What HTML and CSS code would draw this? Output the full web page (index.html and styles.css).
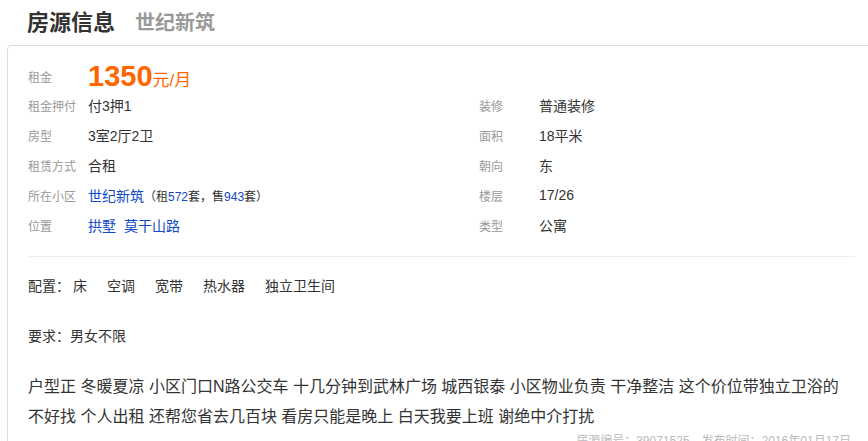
FILE: index.html
```html
<!DOCTYPE html>
<html lang="zh-CN">

<head>
    <meta charset="UTF-8">
    <meta name="viewport" content="width=device-width, initial-scale=1.0">
    <title>房源信息 - 世纪新筑</title>
    <link rel="stylesheet" href="styles.css">
</head>

<body>
    <div class="page-title">
        <h1>房源信息</h1>
        <span class="estate-name">世纪新筑</span>
    </div>

    <div class="card">
        <div class="info">
            <div class="item item-wide">
                <span class="label">租金</span>
                <span class="price">1350<small>元/月</small></span>
            </div>

            <div class="item"><span class="label">租金押付</span><span class="value">付3押1</span></div>
            <div class="item"><span class="label">装修</span><span class="value">普通装修</span></div>

            <div class="item"><span class="label">房型</span><span class="value">3室2厅2卫</span></div>
            <div class="item"><span class="label">面积</span><span class="value">18平米</span></div>

            <div class="item"><span class="label">租赁方式</span><span class="value">合租</span></div>
            <div class="item"><span class="label">朝向</span><span class="value">东</span></div>

            <div class="item">
                <span class="label">所在小区</span>
                <span class="value"><a href="#">世纪新筑</a><span class="count">（租<a href="#">572</a>套，售<a href="#">943</a>套）</span></span>
            </div>
            <div class="item"><span class="label">楼层</span><span class="value">17/26</span></div>

            <div class="item">
                <span class="label">位置</span>
                <span class="value"><a href="#" class="area">拱墅</a><a href="#">莫干山路</a></span>
            </div>
            <div class="item"><span class="label">类型</span><span class="value">公寓</span></div>
        </div>

        <div class="divider"></div>

        <div class="config">
            <em>配置：</em><span>床</span><span>空调</span><span>宽带</span><span>热水器</span><span>独立卫生间</span>
        </div>

        <div class="require">要求：男女不限</div>

        <p class="desc">户型正 冬暖夏凉 小区门口N路公交车 十几分钟到武林广场 城西银泰 小区物业负责 干净整洁 这个价位带独立卫浴的不好找 个人出租 还帮您省去几百块 看房只能是晚上 白天我要上班 谢绝中介打扰</p>

        <div class="meta">
            <span>房源编号：39071525</span>
            <span>发布时间：2016年01月17日</span>
        </div>
    </div>
</body>

</html>
```

FILE: styles.css
```css
html, body {
    overflow: hidden;
}
body {
    margin: 0;
    background-color: #fff;
    font-family: "Liberation Sans", "Noto Sans CJK SC", sans-serif;
    color: #333;
}
a {
    color: #1048c8; /* link blue */
    text-decoration: none;
}
.page-title {
    display: flex;
    align-items: baseline;
    gap: 20px;
    padding: 7px 0 0 27px;
    height: 45px;
    box-sizing: border-box;
}
.page-title h1 {
    margin: 0;
    font-size: 22px;
    line-height: 32px;
    font-weight: bold;
    color: #333;
}
.estate-name {
    font-size: 20px;
    font-weight: bold;
    color: #999;
}
.card {
    width: 869px;
    box-sizing: border-box;
    margin-left: 7px;
    padding: 16px 20px 0 20px;
    border: 1px solid #ddd;
    border-radius: 4px;
}
.info {
    display: grid;
    grid-template-columns: 451px 1fr;
}
.item {
    display: flex;
    align-items: center;
    height: 30px;
}
.item-wide {
    grid-column: 1 / 3;
    height: 28px;
}
.label {
    width: 60px;
    flex-shrink: 0;
    font-size: 12px;
    color: #999;
}
.value {
    font-size: 14px;
    color: #333;
}
.value .area {
    margin-right: 8px;
}
.count {
    font-size: 12px;
}
.price {
    font-size: 29px;
    font-weight: bold;
    color: #f60; /* orange price */
}
.price small {
    font-size: 17px;
    font-weight: normal;
}
.divider {
    height: 1px;
    margin-top: 16px;
    background-color: #eee;
}
.config {
    margin-top: 14px;
    font-size: 14px;
    line-height: 30px;
}
.config em {
    font-style: normal;
    margin-right: 3px;
}
.config span {
    margin-right: 20px;
}
.require {
    margin-top: 20px;
    font-size: 14px;
    line-height: 30px;
}
.desc {
    width: 820px;
    margin: 21px 0 0;
    font-size: 16px;
    line-height: 30px;
}
.meta {
    display: flex;
    justify-content: flex-end;
    gap: 12px;
    margin-top: -1px;
    padding-right: 4px;
    font-size: 12px;
    line-height: 20px;
    color: #bbb;
}
```
